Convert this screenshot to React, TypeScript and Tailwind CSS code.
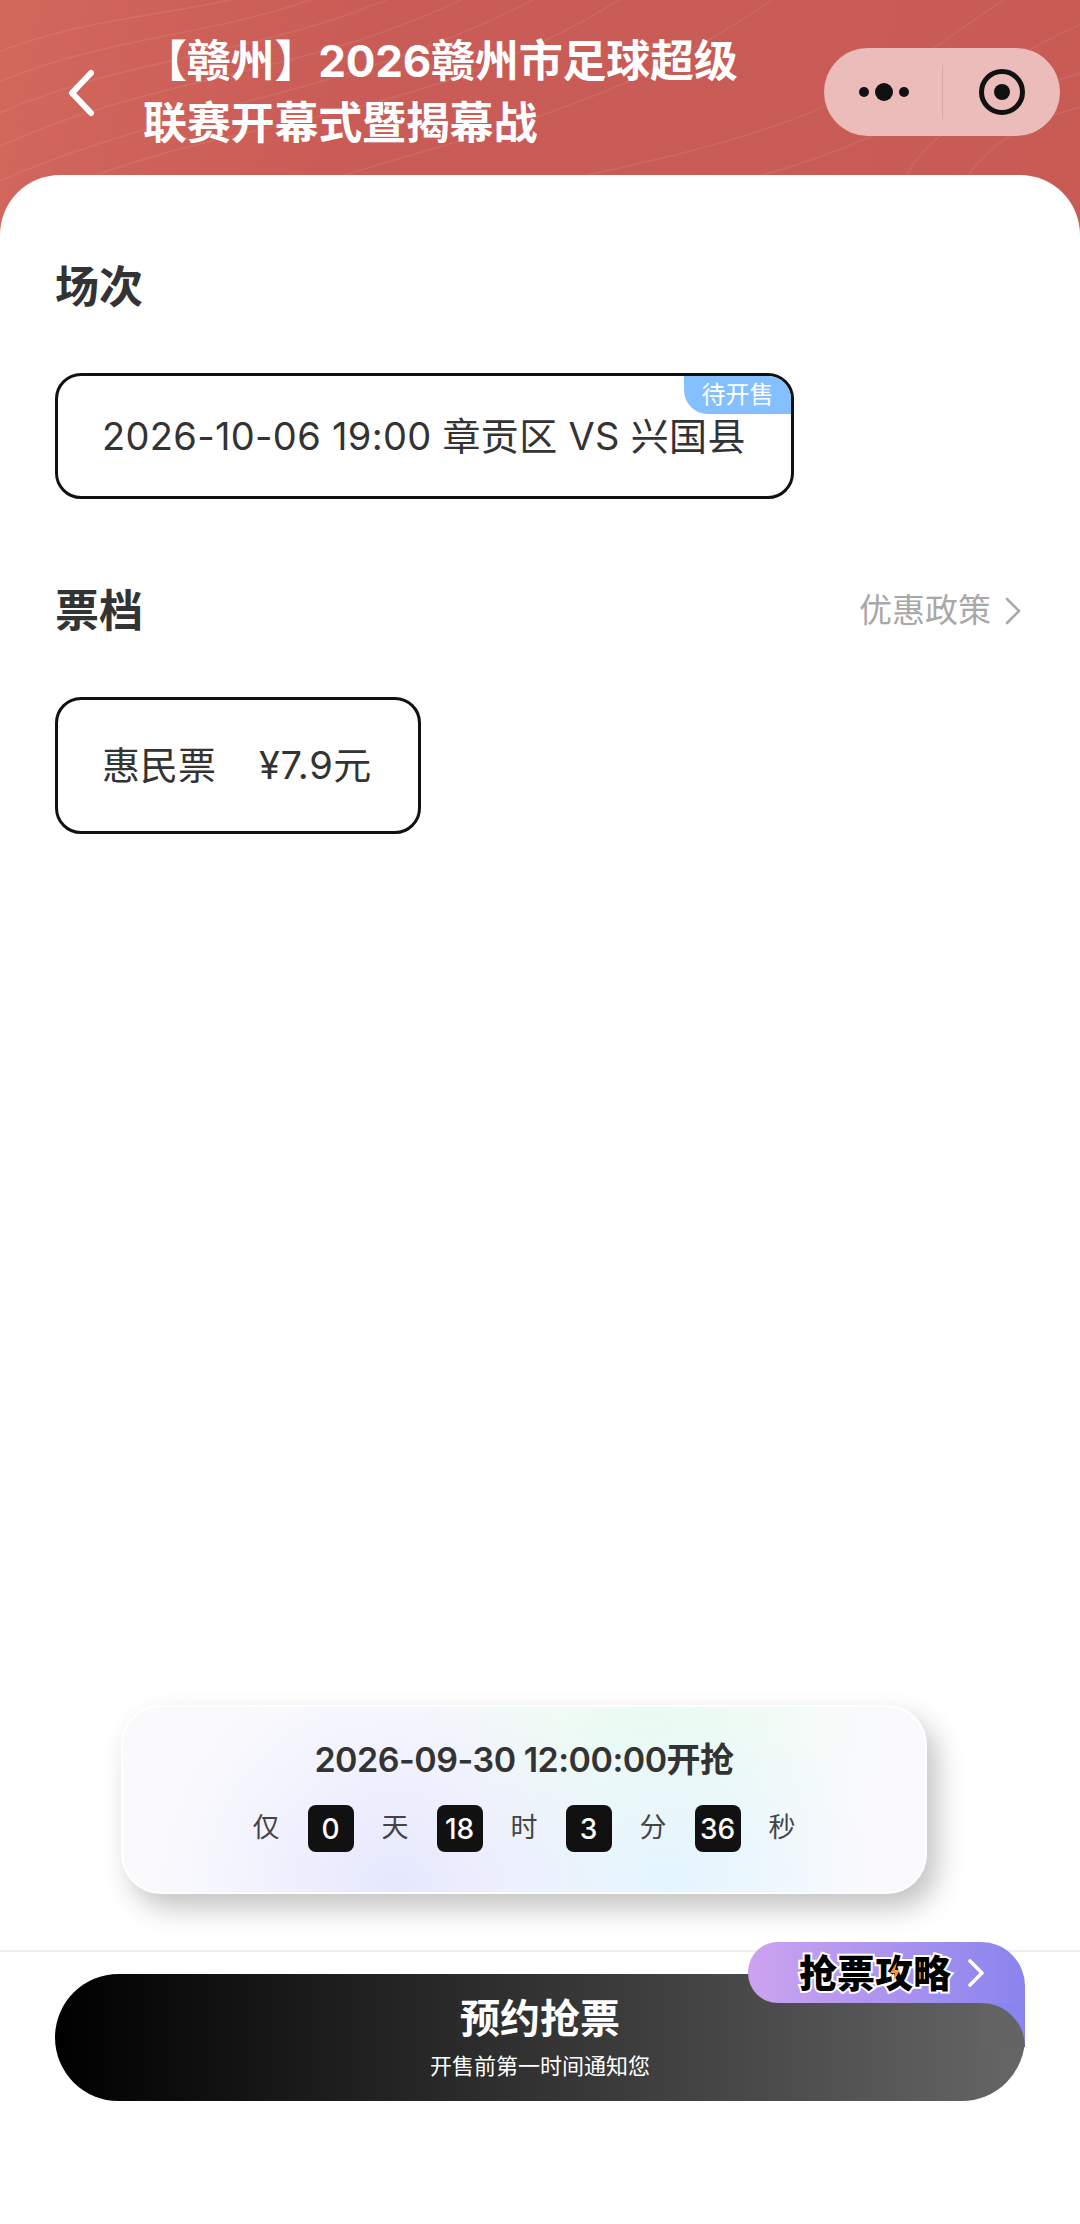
const contourLines = [
  'M-20 60 C 90 10, 190 20, 300 -20',
  'M-20 90 C 110 30, 230 40, 360 -20',
  'M-20 122 C 130 50, 270 60, 430 -20',
  'M-20 156 C 150 70, 320 80, 500 -20',
  'M-20 190 C 170 100, 360 100, 570 -20',
  'M60 190 C 240 110, 430 130, 650 -20',
  'M300 190 C 470 130, 610 120, 800 -20',
  'M520 190 C 700 150, 820 130, 960 30 S 1060 -10, 1090 -20',
  'M700 190 C 800 170, 900 130, 980 80 S 1070 30, 1090 20',
  'M900 190 C 920 140, 960 110, 1090 70',
  'M960 190 C 980 150, 1020 120, 1090 105',
];

const countdown = [
  { value: '0', unit: '天' },
  { value: '18', unit: '时' },
  { value: '3', unit: '分' },
  { value: '36', unit: '秒' },
];

function Chevron({ className, weight = 2.6 }: { className: string; weight?: number }) {
  return (
    <svg viewBox="0 0 16 28" fill="none" className={className}>
      <path d="M2 2 L14 14 L2 26" stroke="currentColor" strokeWidth={weight} strokeLinecap="round" strokeLinejoin="round" />
    </svg>
  );
}

export default function App() {
  return (
    <div className="relative flex h-[2224px] w-[1080px] flex-col overflow-hidden bg-[linear-gradient(100deg,#d2675c_0%,#c95c56_25%,#c85b55_70%,#cc5750_100%)] font-['Inter','Noto_Sans_CJK_SC',sans-serif]">
      <svg viewBox="0 0 1080 240" fill="none" className="absolute left-0 top-0 h-[240px] w-[1080px]">
        {contourLines.map((d) => (
          <path key={d} d={d} stroke="#ffffff" strokeOpacity="0.08" strokeWidth="1.5" />
        ))}
      </svg>

      <header className="relative flex h-[175px] shrink-0 items-start pl-[66px]">
        <svg viewBox="0 0 30 48" fill="none" className="mt-[69px] h-[48px] w-[30px]">
          <path d="M25 4 L6 24 L25 44" stroke="#ffffff" strokeWidth="6" strokeLinecap="round" strokeLinejoin="round" />
        </svg>
        <h1 className="ml-[47px] mt-[30px] w-[600px] text-[44px] font-bold leading-[62px] tracking-[-0.2px] text-white">
          【赣州】2026赣州市足球超级联赛开幕式暨揭幕战
        </h1>
        <div className="ml-auto mr-[20px] mt-[48px] flex h-[88px] w-[236px] items-center rounded-full bg-[#ebbcb9]">
          <div className="flex w-[118px] items-center justify-center gap-[6px] pl-[2px]">
            <span className="h-[10px] w-[10px] rounded-full bg-[#111111]" />
            <span className="h-[18px] w-[18px] rounded-full bg-[#111111]" />
            <span className="h-[10px] w-[10px] rounded-full bg-[#111111]" />
          </div>
          <div className="h-[54px] w-px bg-[#d9a5a2]" />
          <div className="flex flex-1 items-center justify-center">
            <div className="flex h-[46px] w-[46px] items-center justify-center rounded-full border-[5px] border-[#111111]">
              <span className="h-[16px] w-[16px] rounded-full bg-[#111111]" />
            </div>
          </div>
        </div>
      </header>

      <main className="relative flex flex-1 flex-col rounded-t-[60px] bg-white pt-[82px]">
        <h2 className="mx-[55px] text-[44px] font-bold leading-[60px] text-[#333333]">场次</h2>

        <div className="relative mx-[55px] mt-[56px] flex h-[126px] w-[739px] items-center overflow-hidden rounded-[26px] border-[3px] border-[#111111] pl-[44px]">
          <span className="text-[38px] tracking-[0.32px] text-[#333333]">2026-10-06 19:00 章贡区 VS 兴国县</span>
          <span className="absolute right-0 top-0 flex h-[38px] w-[107px] items-center justify-center rounded-bl-[24px] bg-[#84bfff] text-[24px] text-white">
            待开售
          </span>
        </div>

        <div className="mx-[55px] mt-[82px] flex items-center justify-between">
          <h2 className="text-[44px] font-bold leading-[60px] text-[#333333]">票档</h2>
          <div className="flex items-center gap-[14px] pr-[4px] text-[#a8a8a8]">
            <span className="text-[33px]">优惠政策</span>
            <Chevron className="h-[28px] w-[16px]" />
          </div>
        </div>

        <div className="mx-[55px] mt-[56px] flex h-[137px] w-[366px] items-center rounded-[26px] border-[3px] border-[#111111] pl-[44px]">
          <span className="text-[38px] text-[#333333]">惠民票</span>
          <span className="ml-[43px] text-[38px] tracking-[0.6px] text-[#333333]">¥7.9元</span>
        </div>

        <div className="flex-1" />

        <section className="ml-[121px] flex h-[189px] w-[806px] flex-col items-center rounded-[40px] border-2 border-white bg-[#fafafd] bg-[radial-gradient(circle_at_34%_100%,#e5e7fe_0%,rgba(229,231,254,0)_42%),radial-gradient(circle_at_68%_100%,#e3f4ff_0%,rgba(227,244,255,0)_36%),radial-gradient(circle_at_66%_0%,#e9fcee_0%,rgba(233,252,238,0)_42%)] shadow-[10px_14px_28px_rgba(0,0,0,0.24)]">
          <div className="mt-[30px] text-[34px] font-semibold leading-[46px] tracking-[-0.5px] text-[#333333]">2026-09-30 12:00:00开抢</div>
          <div className="mt-[22px] flex items-center gap-[28px]">
            <span className="w-[27px] text-center text-[27px] text-[#444444]">仅</span>
            {countdown.map((item) => (
              <div key={item.unit} className="flex items-center gap-[28px]">
                <span className="flex h-[47px] w-[46px] items-center justify-center rounded-[8px] bg-[#111111] text-[28px] font-medium text-white">
                  {item.value}
                </span>
                <span className="w-[27px] text-center text-[27px] text-[#444444]">{item.unit}</span>
              </div>
            ))}
          </div>
        </section>

        <footer className="mt-[56px] border-t-2 border-[#eeeeee] px-[55px] pb-[123px] pt-[22px]">
          <div className="relative flex h-[127px] w-[970px] flex-col items-center rounded-full bg-[linear-gradient(90deg,#000000_0%,#666666_100%)] text-white">
            <span className="mt-[18px] text-[40px] font-bold leading-[54px]">预约抢票</span>
            <span className="mt-[5px] text-[22px] leading-[30px]">开售前第一时间通知您</span>
            <div className="absolute right-0 top-[29px] h-[44px] w-[44px] bg-[#8a84ee]">
              <div className="h-full w-full rounded-tr-[44px] bg-[#636363]" />
            </div>
            <div className="absolute -top-[32px] right-0 flex h-[61px] w-[277px] items-center rounded-bl-[30px] rounded-tl-[30px] rounded-tr-[44px] bg-[linear-gradient(90deg,#cda3f0_0%,#8a84ee_100%)] pl-[51px]">
              <span className="relative text-[38px] font-black leading-[50px] text-black [-webkit-text-stroke:4px_#ffffff] [paint-order:stroke_fill]">
                抢票攻略
                <svg viewBox="0 0 12 20" className="absolute left-[90px] top-[14px] h-[20px] w-[12px]">
                  <path d="M8 0 L1 11 H6 L4 20 L11 8 H6 Z" fill="#f59a3c" />
                </svg>
              </span>
              <Chevron className="ml-[17px] h-[28px] w-[16px] text-white" weight={3.6} />
            </div>
          </div>
        </footer>
      </main>
    </div>
  );
}
